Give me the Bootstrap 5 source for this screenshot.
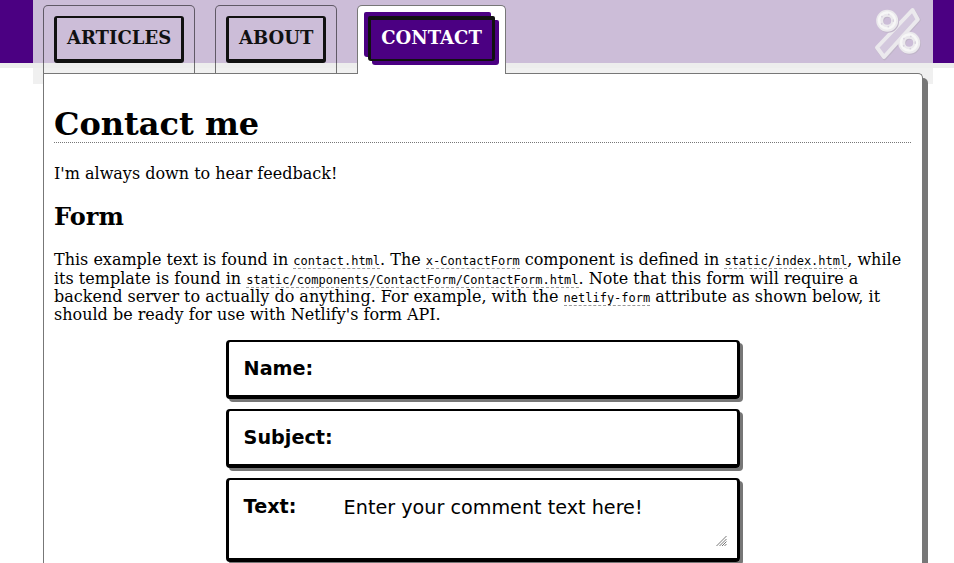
<!DOCTYPE html>
<html lang="en">
<head>
<meta charset="utf-8">
<meta name="viewport" content="width=device-width, initial-scale=1">
<title>Contact me</title>
<link href="https://cdn.jsdelivr.net/npm/bootstrap@5.3.0/dist/css/bootstrap.min.css" rel="stylesheet">
<style>
body { font: 16px/18.4px "DejaVu Serif", serif; color: #000; background: #fff; height: 563px; overflow: hidden; }
.site-head { height: 63px; background: #4b0082; box-shadow: 0 5px #ededed; }
.head-inner { width: 900px; height: 84px; margin-left: 33px; background: linear-gradient(#ccbdd8 63px, #ededed 63px, #ededed 68px, #f0f0f0 68px); padding: 5px 10px 0; }
.tab-list { gap: 20px; height: 69px; position: relative; z-index: 1; }
.page-tab { border: 1px solid rgba(0,0,0,.53); border-bottom: 0; border-radius: 5px 5px 0 0; padding: 10px; height: 68px; }
.page-tab.current { background: #fff; border-color: #777; height: 69px; }
.tab-btn { display: block; height: 47px; border: solid #111; border-width: 2px 3px 4px; border-radius: 3px; padding: 0 10px; font-weight: 700; font-size: 18px; line-height: 39px; color: #111; text-decoration: none; text-align: center; }
.w-articles { width: 130px; } .w-about { width: 100px; }
.current .tab-btn { width: 127px; height: 45px; border-width: 4px 3px 2px; border-radius: 2px 2px 3px 3px; line-height: 35px; color: #fff; background: #4b0082; box-shadow: 4px 4px #4b0082, -4px -4px #4b0082; }
.logo { margin-top: -1px; }
.sheet { width: 880px; height: 490px; margin: 10px 0 0 43px; border: 1px solid #777; border-bottom: 0; border-radius: 0 5px 0 0; background: #fff; box-shadow: 5px 5px #777; padding: 32px 11px 0 10px; position: relative; }
h1 { font-size: 32px; line-height: 37px; height: 37px; font-weight: 700; border-bottom: 1px dotted #777; margin: 0 0 22px; }
h2 { font-size: 24px; line-height: 28px; font-weight: 700; margin: 20px 0; }
.intro { line-height: 18.2px; }
code { font: 12px/14px "DejaVu Sans Mono", monospace; color: #000; border-bottom: 1px dashed #999; }
.fields { width: 514px; margin: 16px 0 0 172px; font-family: "DejaVu Sans", sans-serif; font-size: 19.2px; gap: 10px; }
.field-box { flex: none; height: 59px; border: solid #000; border-width: 2px 3px 4px; border-radius: 4px; box-shadow: 3px 3px #777; padding: 15px 10px 0 14.6px; line-height: 23px; }
.field-box label { width: 100px; font-weight: 700; }
.field-box input, .field-box textarea { border: 0; padding: 0; background: transparent; outline: 0; color: #000; line-height: 23px; height: 23px; }
.field-box.tall { height: 84px; }
.field-box textarea { height: 51px; margin-top: 1px; resize: none; overflow: hidden; }
textarea::placeholder { color: #000; opacity: 1; }
.grip { flex: none; margin-top: 40px; }
</style>
</head>
<body>
<header class="site-head">
  <div class="head-inner d-flex justify-content-between align-items-start">
    <nav class="tab-list d-flex">
      <div class="page-tab"><a class="tab-btn w-articles" href="#">ARTICLES</a></div>
      <div class="page-tab"><a class="tab-btn w-about" href="#">ABOUT</a></div>
      <div class="page-tab current"><a class="tab-btn" href="#">CONTACT</a></div>
    </nav>
    <svg class="logo" width="50" height="58" viewBox="873 4 50 58" fill="none">
      <defs><filter id="soft" x="-20%" y="-20%" width="140%" height="140%"><feGaussianBlur stdDeviation=".7"/></filter></defs>
      <g filter="url(#soft)" stroke-linejoin="round">
        <path d="M913 11 918.500 20 884.500 58 877.500 48.500Z" stroke="#c0b5c9" stroke-width="4.500"/>
        <path d="M912.500 10 917.800 19.500 884 57 877 47.500Z" fill="#d3c8dd" stroke="#ebe9ed" stroke-width="4"/>
        <circle cx="888" cy="21.800" r="7.500" stroke="#c0b5c9" stroke-width="7"/>
        <circle cx="887.200" cy="20.800" r="7.500" stroke="#ebe9ed" stroke-width="7"/>
        <circle cx="910" cy="43.800" r="7.500" stroke="#c0b5c9" stroke-width="7"/>
        <circle cx="909.200" cy="42.800" r="7.500" stroke="#ebe9ed" stroke-width="7"/>
        <g stroke="#f7f7f7" stroke-width="2.500"><circle cx="887" cy="20.500" r="8"/><circle cx="909" cy="42.500" r="8"/></g>
        <g stroke="#d8d2de" stroke-width="1.500" stroke-dasharray="1.500 6"><circle cx="887" cy="20.500" r="6.300"/><circle cx="909" cy="42.500" r="6.300"/></g>
      </g>
    </svg>
  </div>
</header>
<main class="sheet">
  <h1>Contact me</h1>
  <p class="mb-0">I'm always down to hear feedback!</p>
  <h2>Form</h2>
  <p class="intro mb-0">This example text is found in <code>contact.html</code>. The <code>x-ContactForm</code> component is defined in <code>static/index.html</code>, while its template is found in <code>static/components/ContactForm/ContactForm.html</code>. Note that this form will require a backend server to actually do anything. For example, with the <code>netlify-form</code> attribute as shown below, it should be ready for use with Netlify's form API.</p>
  <form class="fields d-flex flex-column">
    <div class="field-box d-flex"><label for="fname">Name:</label><input class="flex-grow-1" id="fname" type="text"></div>
    <div class="field-box d-flex"><label for="fsubject">Subject:</label><input class="flex-grow-1" id="fsubject" type="text"></div>
    <div class="field-box tall d-flex"><label for="ftext">Text:</label><textarea class="flex-grow-1" id="ftext" placeholder="Enter your comment text here!"></textarea><svg class="grip" width="12" height="12" viewBox="0 0 12 12" stroke="#777"><path d="M1.500 11 11.500 1M4.500 11 11.500 4M7 11 11.500 6.500M9.500 11 11.500 9"/></svg></div>
  </form>
</main>
<script src="https://cdn.jsdelivr.net/npm/bootstrap@5.3.0/dist/js/bootstrap.bundle.min.js"></script>
</body>
</html>
